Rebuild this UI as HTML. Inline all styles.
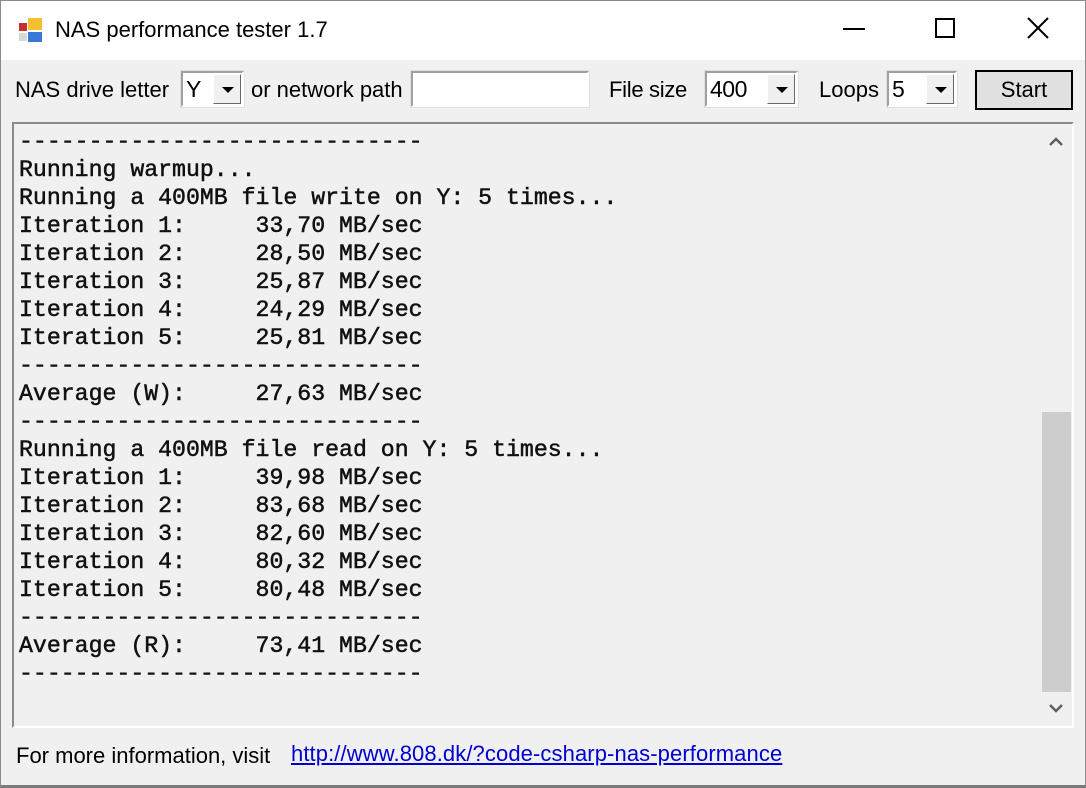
<!DOCTYPE html>
<html><head><meta charset="utf-8"><style>
*{margin:0;padding:0;box-sizing:border-box}
body{width:1086px;height:788px;background:#f0f0f0;position:relative;overflow:hidden;font-family:"Liberation Sans",sans-serif;color:#000}
.abs{position:absolute}
#frame{left:0;top:0;width:1086px;height:788px;border:1px solid #8a8a8a;border-bottom:3px solid #7a7a7a}
#title{left:1px;top:0;width:1084px;height:60px;background:#fff}
.lbl{font-size:22px;letter-spacing:0;top:77px}
.combo{height:36px;top:71px;background:#fff;border:2px solid;border-color:#a0a0a0 #fff #fff #a0a0a0;outline:1px solid #e0e0e0}
.combo span{position:absolute;left:3px;top:3px;font-size:23px;letter-spacing:-0.5px}
.combo i{position:absolute;right:1px;top:1px;width:28px;height:30px;background:#f0f0f0;border:1px solid;border-color:#fff #696969 #696969 #fff}
.combo i:after{content:"";position:absolute;left:8px;top:12px;border-left:6px solid transparent;border-right:6px solid transparent;border-top:6px solid #000}
#out{left:12px;top:122px;width:1062px;height:606px;border:2px solid;border-color:#8a8a8a #fff #fff #8a8a8a;background:#f0f0f0}
pre{position:absolute;left:19px;top:128px;font-family:"Liberation Mono",monospace;font-weight:normal;font-size:23.2px;line-height:28px;color:#111;-webkit-text-stroke:0.5px #111}
#sb{left:1040px;top:124px;width:32px;height:602px;background:#f0f0f0}
</style></head><body>
<div id="title" class="abs"></div>
<div id="frame" class="abs"></div>
<svg class="abs" style="left:18px;top:16px" width="28" height="28" viewBox="0 0 28 28">
<rect x="1" y="7" width="8" height="8" fill="#c43030"/><rect x="1" y="17" width="8" height="8" fill="#d8d8d8"/>
<rect x="10" y="2" width="14" height="12" fill="#f2c030"/><rect x="10" y="16" width="14" height="10" fill="#3a78d8"/>
</svg>
<div class="abs" style="left:55px;top:17px;font-size:22px">NAS performance tester 1.7</div>
<div class="abs" style="left:843px;top:28px;width:22px;height:2px;background:#000"></div>
<div class="abs" style="left:935px;top:18px;width:20px;height:20px;border:2px solid #000"></div>
<svg class="abs" style="left:1027px;top:17px" width="22" height="22"><path d="M1 1L21 21M21 1L1 21" stroke="#000" stroke-width="2"/></svg>

<div class="abs lbl" style="left:15px">NAS drive letter</div>
<div class="abs combo" style="left:181px;width:63px"><span>Y</span><i></i></div>
<div class="abs lbl" style="left:251px">or network path</div>
<div class="abs combo" style="left:411px;width:178px"></div>
<div class="abs lbl" style="left:609px;letter-spacing:-0.3px">File size</div>
<div class="abs combo" style="left:705px;width:93px"><span>400</span><i></i></div>
<div class="abs lbl" style="left:819px">Loops</div>
<div class="abs combo" style="left:887px;width:70px"><span>5</span><i></i></div>
<div class="abs" style="left:975px;top:70px;width:98px;height:40px;border:2px solid #000;background:#e1e1e1;font-size:22px;text-align:center;line-height:35px">Start</div>

<div id="out" class="abs"></div>
<pre>-----------------------------
Running warmup...
Running a 400MB file write on Y: 5 times...
Iteration 1:     33,70 MB/sec
Iteration 2:     28,50 MB/sec
Iteration 3:     25,87 MB/sec
Iteration 4:     24,29 MB/sec
Iteration 5:     25,81 MB/sec
-----------------------------
Average (W):     27,63 MB/sec
-----------------------------
Running a 400MB file read on Y: 5 times...
Iteration 1:     39,98 MB/sec
Iteration 2:     83,68 MB/sec
Iteration 3:     82,60 MB/sec
Iteration 4:     80,32 MB/sec
Iteration 5:     80,48 MB/sec
-----------------------------
Average (R):     73,41 MB/sec
-----------------------------</pre>
<div id="sb" class="abs"></div>
<div class="abs" style="left:1042px;top:412px;width:29px;height:280px;background:#cdcdcd"></div>
<svg class="abs" style="left:1048px;top:136px" width="16" height="12"><path d="M2 9L8 3L14 9" stroke="#606060" stroke-width="2.5" fill="none"/></svg>
<svg class="abs" style="left:1048px;top:702px" width="16" height="12"><path d="M2 3L8 9L14 3" stroke="#606060" stroke-width="2.5" fill="none"/></svg>

<div class="abs" style="left:16px;top:743px;font-size:22px">For more information, visit</div>
<div class="abs" style="left:291px;top:741px;font-size:22px;letter-spacing:0.1px;color:#0000d0;text-decoration:underline">http://www.808.dk/?code-csharp-nas-performance</div>
</body></html>
